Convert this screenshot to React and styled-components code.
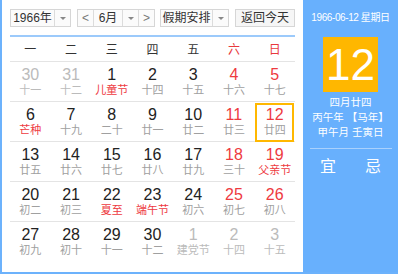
import styled, { createGlobalStyle } from 'styled-components';

const GlobalStyle = createGlobalStyle`
    body {
        margin: 0;
        background: #fff;
        font-family: "Liberation Sans", "Noto Sans CJK SC", sans-serif;
    }
`;

const Frame = styled.div`
    display: flex;
    width: 396px;
    height: 272px;
    border-left: 2px solid #6cb2fc;
    border-bottom: 2px solid #6cb2fc;
`;

const Main = styled.div`
    width: 285px;
    padding: 9px 8px 0 8px;
`;

const Toolbar = styled.div`
    display: flex;
    align-items: center;
    height: 18px;
`;

const Select = styled.div`
    display: flex;
    height: 16px;
    border: 1px solid #d6d6d6;
    background: #fbfbfb;
    margin-left: ${(p) => p.$gap || 0}px;
    font-size: 12px;
    color: #333;
`;

const SelectLabel = styled.div`
    width: ${(p) => p.$w}px;
    display: flex;
    align-items: center;
    justify-content: center;
    line-height: 16px;
`;

const Arrow = styled.div`
    width: 15px;
    border-left: 1px solid #dcdcdc;
    display: flex;
    align-items: center;
    justify-content: center;
    &::after {
        content: '';
        border-left: 3px solid transparent;
        border-right: 3px solid transparent;
        border-top: 3px solid #888;
    }
`;

const StepButton = styled.div`
    width: 15px;
    display: flex;
    align-items: center;
    justify-content: center;
    color: #777;
    font-size: 12px;
    border-left: ${(p) => (p.$next ? '1px solid #dcdcdc' : 'none')};
    border-right: ${(p) => (p.$next ? 'none' : '1px solid #dcdcdc')};
`;

const TodayButton = styled.div`
    margin-left: 6px;
    width: 61px;
    height: 16px;
    border: 1px solid #d6d6d6;
    background: #f6f6f6;
    font-size: 12px;
    color: #333;
    line-height: 16px;
    text-align: center;
`;

const Rule = styled.div`
    margin-top: 8px;
    height: 2px;
    background: #9ccafb;
`;

const WeekHead = styled.div`
    display: grid;
    grid-template-columns: repeat(7, 1fr);
    height: 24px;
`;

const WeekName = styled.div`
    display: flex;
    align-items: center;
    justify-content: center;
    padding-bottom: 2px;
    font-size: 12px;
    color: ${(p) => (p.$red ? '#e8393d' : '#333')};
`;

const WeekRow = styled.div`
    display: grid;
    grid-template-columns: repeat(7, 1fr);
    border-top: 1.5px solid #e4e4e4;
    height: 39px;
`;

const Cell = styled.div`
    margin: 1px 1px 0 1px;
    height: 34px;
    border: 2px solid ${(p) => (p.$today ? '#ffb800' : 'transparent')};
    display: flex;
    flex-direction: column;
    align-items: center;
    padding-top: 1px;
`;

const DayNum = styled.div`
    font-size: 16px;
    line-height: 17px;
    color: ${(p) => (p.$out ? '#bbb' : p.$red ? '#ee3a3f' : '#222')};
`;

const Lunar = styled.div`
    margin-top: 1px;
    font-size: 11px;
    line-height: 13px;
    color: ${(p) => (p.$out ? '#bbb' : p.$red ? '#ee3a3f' : '#a0a0a0')};
`;

const Side = styled.div`
    flex: 1;
    background: #68b0fd;
    color: #fff;
    display: flex;
    flex-direction: column;
    align-items: center;
`;

const DateLine = styled.div`
    margin-top: 11px;
    font-size: 10px;
    letter-spacing: -0.4px;
    line-height: 14px;
    white-space: nowrap;
`;

const BigDay = styled.div`
    margin-top: 12px;
    width: 55px;
    height: 55px;
    background: #ffb700;
    font-size: 44px;
    line-height: 55px;
    text-align: center;
`;

const InfoBlock = styled.div`
    margin-top: 3px;
    display: flex;
    flex-direction: column;
    align-items: center;
`;

const InfoLine = styled.div`
    font-size: 10.5px;
    line-height: 15px;
    white-space: nowrap;
`;

const Divider = styled.div`
    margin-top: 8px;
    width: 82px;
    height: 1px;
    background: #a9d1fd;
`;

const Luck = styled.div`
    margin-top: 8px;
    display: flex;
    gap: 29px;
    font-size: 16px;
    line-height: 20px;
`;

const weekNames = ['一', '二', '三', '四', '五', '六', '日'];

const weeks = [
    [
        { d: 30, l: '十一', out: true },
        { d: 31, l: '十二', out: true },
        { d: 1, l: '儿童节', lred: true },
        { d: 2, l: '十四' },
        { d: 3, l: '十五' },
        { d: 4, l: '十六', red: true },
        { d: 5, l: '十七', red: true },
    ],
    [
        { d: 6, l: '芒种', lred: true },
        { d: 7, l: '十九' },
        { d: 8, l: '二十' },
        { d: 9, l: '廿一' },
        { d: 10, l: '廿二' },
        { d: 11, l: '廿三', red: true },
        { d: 12, l: '廿四', red: true, today: true },
    ],
    [
        { d: 13, l: '廿五' },
        { d: 14, l: '廿六' },
        { d: 15, l: '廿七' },
        { d: 16, l: '廿八' },
        { d: 17, l: '廿九' },
        { d: 18, l: '三十', red: true },
        { d: 19, l: '父亲节', red: true, lred: true },
    ],
    [
        { d: 20, l: '初二' },
        { d: 21, l: '初三' },
        { d: 22, l: '夏至', lred: true },
        { d: 23, l: '端午节', lred: true },
        { d: 24, l: '初六' },
        { d: 25, l: '初七', red: true },
        { d: 26, l: '初八', red: true },
    ],
    [
        { d: 27, l: '初九' },
        { d: 28, l: '初十' },
        { d: 29, l: '十一' },
        { d: 30, l: '十二' },
        { d: 1, l: '建党节', out: true },
        { d: 2, l: '十四', out: true },
        { d: 3, l: '十五', out: true },
    ],
];

export default function App() {
    return (
        <>
            <GlobalStyle />
            <Frame>
                <Main>
                    <Toolbar>
                        <Select>
                            <SelectLabel $w={43}>1966年</SelectLabel>
                            <Arrow />
                        </Select>
                        <Select $gap={6}>
                            <StepButton>&lt;</StepButton>
                            <SelectLabel $w={28}>6月</SelectLabel>
                            <Arrow />
                            <StepButton $next>&gt;</StepButton>
                        </Select>
                        <Select $gap={5}>
                            <SelectLabel $w={51}>假期安排</SelectLabel>
                            <Arrow />
                        </Select>
                        <TodayButton>返回今天</TodayButton>
                    </Toolbar>
                    <Rule />
                    <WeekHead>
                        {weekNames.map((n, i) => (
                            <WeekName key={n} $red={i > 4}>
                                {n}
                            </WeekName>
                        ))}
                    </WeekHead>
                    {weeks.map((week, wi) => (
                        <WeekRow key={wi}>
                            {week.map((day, di) => (
                                <Cell key={di} $today={day.today}>
                                    <DayNum $out={day.out} $red={day.red}>
                                        {day.d}
                                    </DayNum>
                                    <Lunar $out={day.out} $red={day.lred}>
                                        {day.l}
                                    </Lunar>
                                </Cell>
                            ))}
                        </WeekRow>
                    ))}
                </Main>
                <Side>
                    <DateLine>1966-06-12 星期日</DateLine>
                    <BigDay>12</BigDay>
                    <InfoBlock>
                        <InfoLine>四月廿四</InfoLine>
                        <InfoLine>丙午年 【马年】</InfoLine>
                        <InfoLine>甲午月 壬寅日</InfoLine>
                    </InfoBlock>
                    <Divider />
                    <Luck>
                        <span>宜</span>
                        <span>忌</span>
                    </Luck>
                </Side>
            </Frame>
        </>
    );
}
